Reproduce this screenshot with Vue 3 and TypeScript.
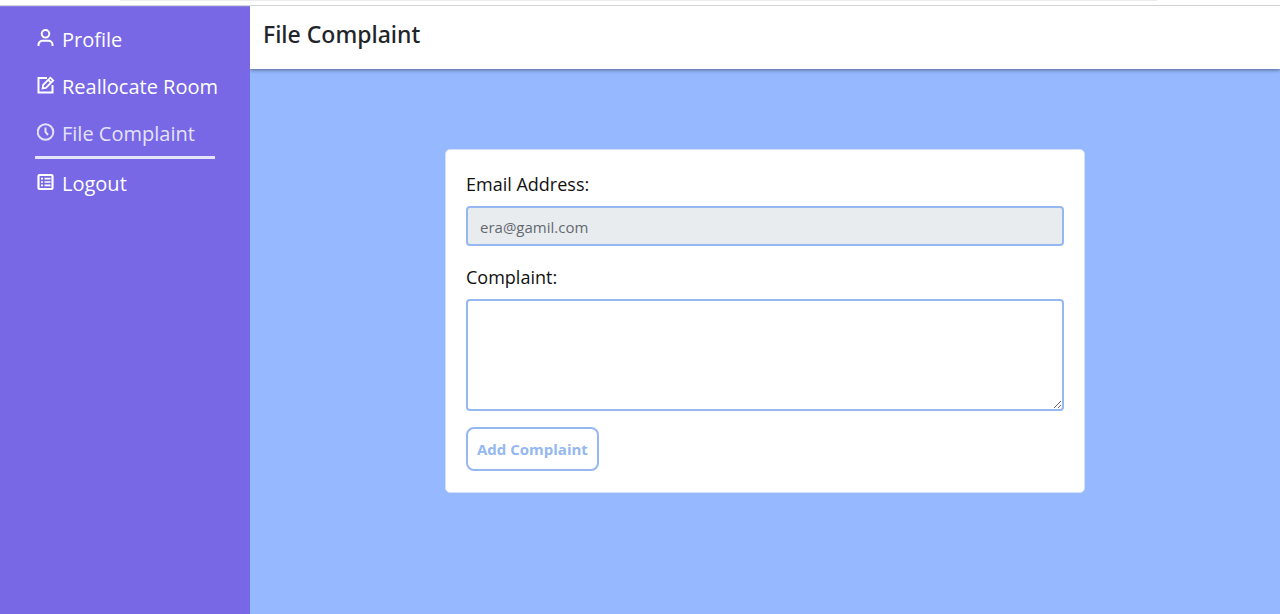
<script setup lang="ts">
import { ref } from 'vue'

type IconName = 'user' | 'edit' | 'clock' | 'list'

interface NavItem {
  label: string
  icon: IconName
}

const items: NavItem[] = [
  { label: 'Profile', icon: 'user' },
  { label: 'Reallocate Room', icon: 'edit' },
  { label: 'File Complaint', icon: 'clock' },
  { label: 'Logout', icon: 'list' },
]

const active = ref('File Complaint')
const email = ref('era@gamil.com')
const complaint = ref('')
</script>

<template>
  <div class="page">
    <div class="topline"><div class="topline-mark"></div></div>
    <div class="shell">
      <nav class="sidebar">
        <a
          v-for="item in items"
          :key="item.label"
          href="#"
          class="nav-link"
          :class="{ active: item.label === active }"
          @click.prevent="active = item.label"
        >
          <svg class="icon" viewBox="0 0 18 18" fill="none" stroke="currentColor" stroke-width="2" aria-hidden="true">
            <template v-if="item.icon === 'user'">
              <circle cx="8.5" cy="4.8" r="3.8" />
              <path d="M1.5 17v-1.2a4 4 0 0 1 4-4h6a4 4 0 0 1 4 4V17" />
            </template>
            <template v-else-if="item.icon === 'edit'">
              <path d="M10 2H1.5v14.5h14V9" />
              <path d="M5.6 12.4l.5-3.4 7.3-7.3 2.8 2.8-7.3 7.3zM11.2 3.9l2.8 2.8" stroke-width="1.8" />
            </template>
            <template v-else-if="item.icon === 'clock'">
              <circle cx="8.5" cy="9" r="7.8" />
              <path d="M8.5 4.5V9l2.5 3" />
            </template>
            <template v-else>
              <rect x="1.5" y="2" width="14" height="14" rx="1" stroke-width="2.2" />
              <path d="M4 5.7h2M7.5 5.7h6M4 9h2M7.5 9h6M4 12.3h2M7.5 12.3h6" stroke-width="1.7" />
            </template>
          </svg>
          <span>{{ item.label }}</span>
        </a>
      </nav>
      <div class="content">
        <header class="header">
          <h1>File Complaint</h1>
        </header>
        <main class="main">
          <form class="card" @submit.prevent>
            <label for="email">Email Address:</label>
            <input id="email" v-model="email" type="email" disabled />
            <label for="complaint">Complaint:</label>
            <textarea id="complaint" v-model="complaint"></textarea>
            <button type="submit">Add Complaint</button>
          </form>
        </main>
      </div>
    </div>
  </div>
</template>

<style>
body {
  margin: 0;
}
</style>

<style scoped>
.page {
  box-sizing: border-box;
  min-height: 100vh;
  display: flex;
  flex-direction: column;
  background: #fff;
  font-family: "Segoe UI", "Open Sans", "Noto Sans", sans-serif;
}
.page *,
.page *::before {
  box-sizing: border-box;
}
.topline {
  height: 6px;
  border-bottom: 1px solid #d2d3d7;
}
.topline-mark {
  width: 81%;
  height: 1px;
  margin-left: 120px;
  background: #ededf0;
}
.shell {
  flex: 1;
  display: flex;
}
.sidebar {
  width: 250px;
  flex: none;
  padding: 8px 35px;
  background: #7868e6;
  border-top: 1px solid #8b80df;
}
.nav-link {
  display: flex;
  align-items: center;
  gap: 7px;
  height: 47px;
  padding: 2px 0 0 2px;
  color: #fff;
  font-size: 20px;
  line-height: 28px;
  text-decoration: none;
  white-space: nowrap;
}
.nav-link.active {
  height: 50px;
  color: #e4e3fb;
  border-bottom: 3px solid #e4e3fb;
}
.icon {
  width: 18px;
  height: 18px;
  flex: none;
  margin-bottom: 4px;
}
.content {
  flex: 1;
  min-width: 0;
  display: flex;
  flex-direction: column;
  background: #95b8ff;
}
.header {
  height: 63px;
  padding: 12px 13px;
  background: #fff;
  box-shadow: 0 1px 4px rgba(0, 0, 0, 0.45);
  clip-path: inset(0 0 -8px 0);
}
.header h1 {
  margin: 0;
  color: #212529;
  font-family: "Segoe UI", "Noto Sans", sans-serif;
  font-size: 23px;
  font-weight: 500;
  line-height: 32px;
}
.main {
  padding: 80px 20px;
}
.card {
  max-width: 640px;
  margin: 0 auto;
  padding: 20px 20px 21px;
  display: flex;
  flex-direction: column;
  align-items: flex-start;
  background: #fff;
  border: 1px solid #d2e0fc;
  border-radius: 5px;
}
label {
  margin-bottom: 8px;
  color: #111;
  font-size: 18px;
  line-height: 28px;
}
input,
textarea {
  width: 100%;
  margin: 0 0 17px;
  padding: 7px 12px 5px;
  border: 2px solid #95b8f0;
  border-radius: 4px;
  background: #fff;
  color: #495057;
  font-family: inherit;
  font-size: 15px;
  line-height: 24px;
}
input {
  height: 40px;
}
input:disabled {
  background: #e9ecef;
  color: #626970;
}
textarea {
  display: block;
  height: 112px;
  margin-bottom: 16px;
  resize: vertical;
}
button {
  height: 44px;
  padding: 0 9px;
  border: 2px solid #95b8f0;
  border-radius: 8px;
  background: #fff;
  color: #95b8f0;
  font-family: inherit;
  font-size: 15px;
  font-weight: 700;
}
</style>
